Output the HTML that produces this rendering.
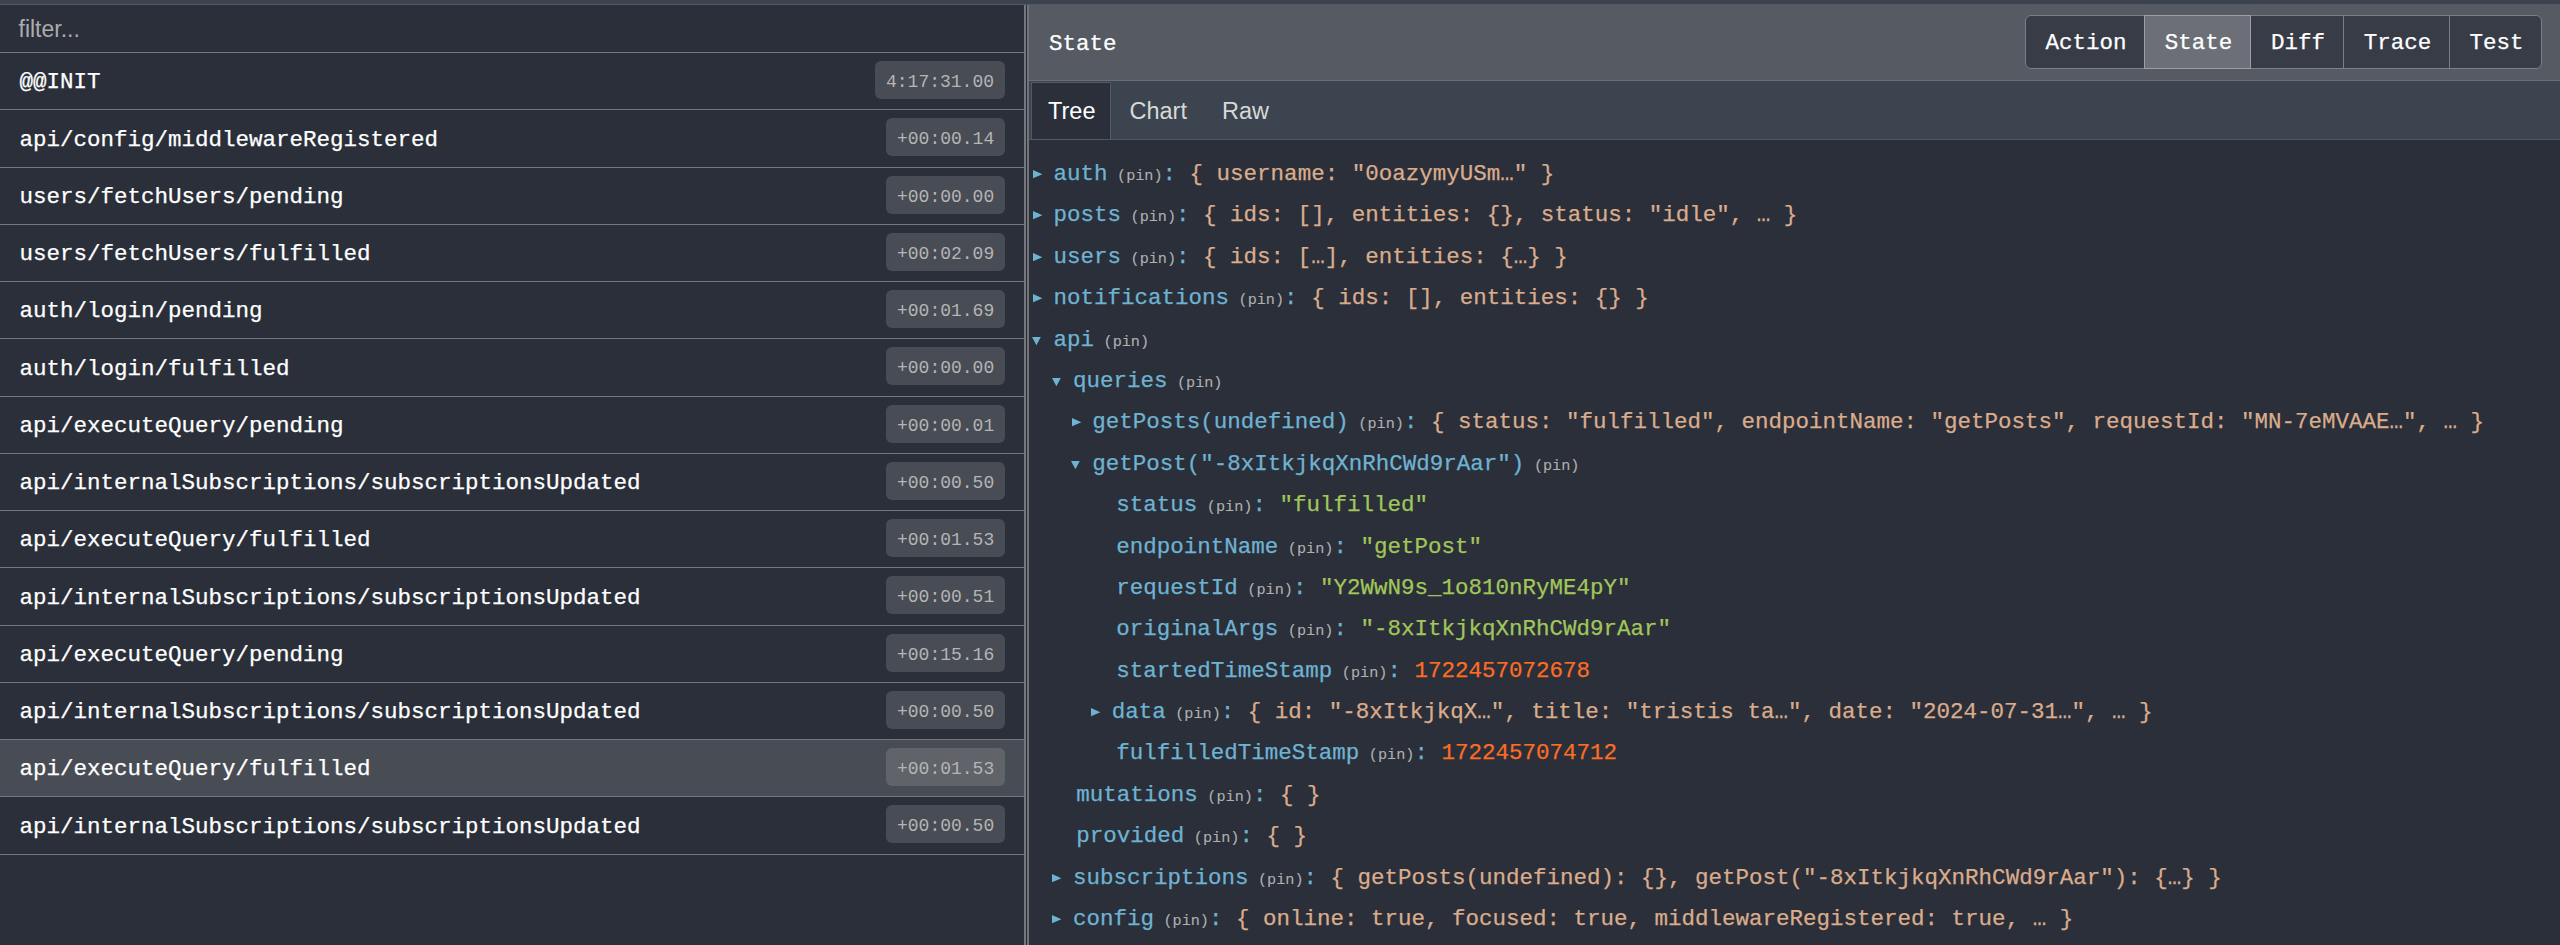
<!DOCTYPE html><html><head><meta charset="utf-8"><style>
*{box-sizing:border-box;margin:0;padding:0}
html,body{width:2560px;height:945px;overflow:hidden;background:#2a2f3a}
body{position:relative;font-family:"Liberation Mono",monospace;color:#fff}
.a{position:absolute;white-space:pre}
.m{font-family:"Liberation Mono",monospace;font-size:22.5px;line-height:22.5px;-webkit-text-stroke:0.25px currentColor}
.s{font-family:"Liberation Sans",sans-serif}
.pin{font-size:15.2px;color:#b0b0b0;padding-left:9.5px;-webkit-text-stroke:0.1px currentColor}
.k{color:#6fb3d2} .v{color:#a1c659} .n{color:#fc6d24} .h{color:#daac8c}
.arr{position:absolute;width:0;height:0}
</style></head><body>
<div class="a" style="left:0px;top:0px;width:2560px;height:4px;background:#3d434e;"></div>
<div class="a" style="left:0px;top:4px;width:2560px;height:1px;background:#4f5a65;"></div>
<div class="a" style="left:1024px;top:5px;width:2px;height:940px;background:#76777e;"></div>
<div class="a" style="left:1026px;top:5px;width:1px;height:940px;background:#282c37;"></div>
<div class="a" style="left:1027px;top:5px;width:2px;height:940px;background:#737479;"></div>
<div class="a s" style="left:18.5px;top:18.18px;font-size:23px;line-height:23px;color:#aaacb0">filter...</div>
<div class="a" style="left:0px;top:52px;width:1024px;height:1px;background:#74777c;"></div>
<div class="a" style="left:0px;top:109px;width:1024px;height:1px;background:#74777c;"></div>
<div class="a m" style="left:19.5px;top:70.80px;color:#fff;font-size:22.5px;line-height:22.5px;">@@INIT</div>
<div class="a" style="left:875px;top:61px;width:130.0px;height:38px;background:#484c54;border-radius:6px"></div>
<div class="a" style="left:886px;top:63px;width:108.0px;height:38px;line-height:38px;font-size:18px;font-family:'Liberation Mono',monospace;color:#b5b5b5">4:17:31.00</div>
<div class="a" style="left:0px;top:167px;width:1024px;height:1px;background:#74777c;"></div>
<div class="a m" style="left:19.5px;top:128.80px;color:#fff;font-size:22.5px;line-height:22.5px;">api/config/middlewareRegistered</div>
<div class="a" style="left:886px;top:118px;width:119.2px;height:38px;background:#484c54;border-radius:6px"></div>
<div class="a" style="left:897px;top:120px;width:97.2px;height:38px;line-height:38px;font-size:18px;font-family:'Liberation Mono',monospace;color:#b5b5b5">+00:00.14</div>
<div class="a" style="left:0px;top:224px;width:1024px;height:1px;background:#74777c;"></div>
<div class="a m" style="left:19.5px;top:185.80px;color:#fff;font-size:22.5px;line-height:22.5px;">users/fetchUsers/pending</div>
<div class="a" style="left:886px;top:176px;width:119.2px;height:38px;background:#484c54;border-radius:6px"></div>
<div class="a" style="left:897px;top:178px;width:97.2px;height:38px;line-height:38px;font-size:18px;font-family:'Liberation Mono',monospace;color:#b5b5b5">+00:00.00</div>
<div class="a" style="left:0px;top:281px;width:1024px;height:1px;background:#74777c;"></div>
<div class="a m" style="left:19.5px;top:242.80px;color:#fff;font-size:22.5px;line-height:22.5px;">users/fetchUsers/fulfilled</div>
<div class="a" style="left:886px;top:233px;width:119.2px;height:38px;background:#484c54;border-radius:6px"></div>
<div class="a" style="left:897px;top:235px;width:97.2px;height:38px;line-height:38px;font-size:18px;font-family:'Liberation Mono',monospace;color:#b5b5b5">+00:02.09</div>
<div class="a" style="left:0px;top:338px;width:1024px;height:1px;background:#74777c;"></div>
<div class="a m" style="left:19.5px;top:299.80px;color:#fff;font-size:22.5px;line-height:22.5px;">auth/login/pending</div>
<div class="a" style="left:886px;top:290px;width:119.2px;height:38px;background:#484c54;border-radius:6px"></div>
<div class="a" style="left:897px;top:292px;width:97.2px;height:38px;line-height:38px;font-size:18px;font-family:'Liberation Mono',monospace;color:#b5b5b5">+00:01.69</div>
<div class="a" style="left:0px;top:396px;width:1024px;height:1px;background:#74777c;"></div>
<div class="a m" style="left:19.5px;top:357.80px;color:#fff;font-size:22.5px;line-height:22.5px;">auth/login/fulfilled</div>
<div class="a" style="left:886px;top:347px;width:119.2px;height:38px;background:#484c54;border-radius:6px"></div>
<div class="a" style="left:897px;top:349px;width:97.2px;height:38px;line-height:38px;font-size:18px;font-family:'Liberation Mono',monospace;color:#b5b5b5">+00:00.00</div>
<div class="a" style="left:0px;top:453px;width:1024px;height:1px;background:#74777c;"></div>
<div class="a m" style="left:19.5px;top:414.80px;color:#fff;font-size:22.5px;line-height:22.5px;">api/executeQuery/pending</div>
<div class="a" style="left:886px;top:405px;width:119.2px;height:38px;background:#484c54;border-radius:6px"></div>
<div class="a" style="left:897px;top:407px;width:97.2px;height:38px;line-height:38px;font-size:18px;font-family:'Liberation Mono',monospace;color:#b5b5b5">+00:00.01</div>
<div class="a" style="left:0px;top:510px;width:1024px;height:1px;background:#74777c;"></div>
<div class="a m" style="left:19.5px;top:471.80px;color:#fff;font-size:22.5px;line-height:22.5px;">api/internalSubscriptions/subscriptionsUpdated</div>
<div class="a" style="left:886px;top:462px;width:119.2px;height:38px;background:#484c54;border-radius:6px"></div>
<div class="a" style="left:897px;top:464px;width:97.2px;height:38px;line-height:38px;font-size:18px;font-family:'Liberation Mono',monospace;color:#b5b5b5">+00:00.50</div>
<div class="a" style="left:0px;top:567px;width:1024px;height:1px;background:#74777c;"></div>
<div class="a m" style="left:19.5px;top:528.80px;color:#fff;font-size:22.5px;line-height:22.5px;">api/executeQuery/fulfilled</div>
<div class="a" style="left:886px;top:519px;width:119.2px;height:38px;background:#484c54;border-radius:6px"></div>
<div class="a" style="left:897px;top:521px;width:97.2px;height:38px;line-height:38px;font-size:18px;font-family:'Liberation Mono',monospace;color:#b5b5b5">+00:01.53</div>
<div class="a" style="left:0px;top:625px;width:1024px;height:1px;background:#74777c;"></div>
<div class="a m" style="left:19.5px;top:586.80px;color:#fff;font-size:22.5px;line-height:22.5px;">api/internalSubscriptions/subscriptionsUpdated</div>
<div class="a" style="left:886px;top:576px;width:119.2px;height:38px;background:#484c54;border-radius:6px"></div>
<div class="a" style="left:897px;top:578px;width:97.2px;height:38px;line-height:38px;font-size:18px;font-family:'Liberation Mono',monospace;color:#b5b5b5">+00:00.51</div>
<div class="a" style="left:0px;top:682px;width:1024px;height:1px;background:#74777c;"></div>
<div class="a m" style="left:19.5px;top:643.80px;color:#fff;font-size:22.5px;line-height:22.5px;">api/executeQuery/pending</div>
<div class="a" style="left:886px;top:634px;width:119.2px;height:38px;background:#484c54;border-radius:6px"></div>
<div class="a" style="left:897px;top:636px;width:97.2px;height:38px;line-height:38px;font-size:18px;font-family:'Liberation Mono',monospace;color:#b5b5b5">+00:15.16</div>
<div class="a" style="left:0px;top:739px;width:1024px;height:1px;background:#74777c;"></div>
<div class="a m" style="left:19.5px;top:700.80px;color:#fff;font-size:22.5px;line-height:22.5px;">api/internalSubscriptions/subscriptionsUpdated</div>
<div class="a" style="left:886px;top:691px;width:119.2px;height:38px;background:#484c54;border-radius:6px"></div>
<div class="a" style="left:897px;top:693px;width:97.2px;height:38px;line-height:38px;font-size:18px;font-family:'Liberation Mono',monospace;color:#b5b5b5">+00:00.50</div>
<div class="a" style="left:0px;top:740px;width:1024px;height:56px;background:#484c54;"></div>
<div class="a" style="left:0px;top:796px;width:1024px;height:1px;background:#74777c;"></div>
<div class="a m" style="left:19.5px;top:757.80px;color:#fff;font-size:22.5px;line-height:22.5px;">api/executeQuery/fulfilled</div>
<div class="a" style="left:886px;top:748px;width:119.2px;height:38px;background:#60636a;border-radius:6px"></div>
<div class="a" style="left:897px;top:750px;width:97.2px;height:38px;line-height:38px;font-size:18px;font-family:'Liberation Mono',monospace;color:#b5b5b5">+00:01.53</div>
<div class="a" style="left:0px;top:854px;width:1024px;height:1px;background:#74777c;"></div>
<div class="a m" style="left:19.5px;top:815.80px;color:#fff;font-size:22.5px;line-height:22.5px;">api/internalSubscriptions/subscriptionsUpdated</div>
<div class="a" style="left:886px;top:805px;width:119.2px;height:38px;background:#484c54;border-radius:6px"></div>
<div class="a" style="left:897px;top:807px;width:97.2px;height:38px;line-height:38px;font-size:18px;font-family:'Liberation Mono',monospace;color:#b5b5b5">+00:00.50</div>
<div class="a" style="left:1029px;top:5px;width:1531px;height:75px;background:#565a62;"></div>
<div class="a" style="left:1029px;top:80px;width:1531px;height:1px;background:#6b6e74;"></div>
<div class="a m" style="left:1049px;top:32.80px;color:#fff;font-size:22.5px;line-height:22.5px;">State</div>
<div class="a" style="left:2025px;top:15px;width:517px;height:54px;border:1px solid #7b7e84;border-radius:6px;background:#383c47;overflow:hidden"></div>
<div class="a" style="left:2145px;top:16px;width:105px;height:52px;background:#6c6f78;"></div>
<div class="a" style="left:2144px;top:15px;width:107px;height:1px;background:#9c9ea3;"></div>
<div class="a" style="left:2144px;top:68px;width:107px;height:1px;background:#9c9ea3;"></div>
<div class="a" style="left:2144px;top:15px;width:1px;height:54px;background:#9c9ea3;"></div>
<div class="a" style="left:2250px;top:15px;width:1px;height:54px;background:#9c9ea3;"></div>
<div class="a" style="left:2343px;top:16px;width:1px;height:52px;background:#7b7e84;"></div>
<div class="a" style="left:2449px;top:16px;width:1px;height:52px;background:#7b7e84;"></div>
<div class="a m" style="left:2045.5px;top:31.80px;color:#fff;font-size:22.5px;line-height:22.5px;">Action</div>
<div class="a m" style="left:2164.75px;top:31.80px;color:#fff;font-size:22.5px;line-height:22.5px;">State</div>
<div class="a m" style="left:2271.0px;top:31.80px;color:#fff;font-size:22.5px;line-height:22.5px;">Diff</div>
<div class="a m" style="left:2363.75px;top:31.80px;color:#fff;font-size:22.5px;line-height:22.5px;">Trace</div>
<div class="a m" style="left:2469.5px;top:31.80px;color:#fff;font-size:22.5px;line-height:22.5px;">Test</div>
<div class="a" style="left:1029px;top:81px;width:1531px;height:58px;background:#3c444f;"></div>
<div class="a" style="left:1029px;top:139px;width:1531px;height:1px;background:#4f5a65;"></div>
<div class="a" style="left:1031px;top:82px;width:80px;height:57px;background:#2a2f3a;border:1px solid #4f5a65;border-bottom:0"></div>
<div class="a s" style="left:1048px;top:99.73px;font-size:23.5px;line-height:23.5px;color:#ffffff">Tree</div>
<div class="a s" style="left:1129.5px;top:99.73px;font-size:23.5px;line-height:23.5px;color:#d8d8d8">Chart</div>
<div class="a s" style="left:1222px;top:99.73px;font-size:23.5px;line-height:23.5px;color:#d8d8d8">Raw</div>
<svg class="a" style="left:1033.00px;top:169.80px" width="11" height="10"><polygon points="0,0 9.4,4.15 0,8.3" fill="#6fb3d2"/></svg>
<div class="a m" style="left:1053.5px;top:162.80px;color:#fff;font-size:22.5px;line-height:22.5px;"><span class="k">auth</span><span class="pin">(pin)</span><span class="k">: </span><span class="h">{ username: "0oazymyUSm…" }</span></div>
<svg class="a" style="left:1033.00px;top:210.80px" width="11" height="10"><polygon points="0,0 9.4,4.15 0,8.3" fill="#6fb3d2"/></svg>
<div class="a m" style="left:1053.5px;top:203.80px;color:#fff;font-size:22.5px;line-height:22.5px;"><span class="k">posts</span><span class="pin">(pin)</span><span class="k">: </span><span class="h">{ ids: [], entities: {}, status: "idle", … }</span></div>
<svg class="a" style="left:1033.00px;top:252.80px" width="11" height="10"><polygon points="0,0 9.4,4.15 0,8.3" fill="#6fb3d2"/></svg>
<div class="a m" style="left:1053.5px;top:245.80px;color:#fff;font-size:22.5px;line-height:22.5px;"><span class="k">users</span><span class="pin">(pin)</span><span class="k">: </span><span class="h">{ ids: […], entities: {…} }</span></div>
<svg class="a" style="left:1033.00px;top:293.80px" width="11" height="10"><polygon points="0,0 9.4,4.15 0,8.3" fill="#6fb3d2"/></svg>
<div class="a m" style="left:1053.5px;top:286.80px;color:#fff;font-size:22.5px;line-height:22.5px;"><span class="k">notifications</span><span class="pin">(pin)</span><span class="k">: </span><span class="h">{ ids: [], entities: {} }</span></div>
<svg class="a" style="left:1032.40px;top:336.90px" width="10" height="10"><polygon points="0,0 8.8,0 4.4,8.2" fill="#6fb3d2"/></svg>
<div class="a m" style="left:1053.5px;top:328.80px;color:#fff;font-size:22.5px;line-height:22.5px;"><span class="k">api</span><span class="pin">(pin)</span></div>
<svg class="a" style="left:1051.80px;top:377.90px" width="10" height="10"><polygon points="0,0 8.8,0 4.4,8.2" fill="#6fb3d2"/></svg>
<div class="a m" style="left:1072.9px;top:369.80px;color:#fff;font-size:22.5px;line-height:22.5px;"><span class="k">queries</span><span class="pin">(pin)</span></div>
<svg class="a" style="left:1071.80px;top:417.80px" width="11" height="10"><polygon points="0,0 9.4,4.15 0,8.3" fill="#6fb3d2"/></svg>
<div class="a m" style="left:1092.3px;top:410.80px;color:#fff;font-size:22.5px;line-height:22.5px;"><span class="k">getPosts(undefined)</span><span class="pin">(pin)</span><span class="k">: </span><span class="h">{ status: "fulfilled", endpointName: "getPosts", requestId: "MN-7eMVAAE…", … }</span></div>
<svg class="a" style="left:1071.20px;top:460.90px" width="10" height="10"><polygon points="0,0 8.8,0 4.4,8.2" fill="#6fb3d2"/></svg>
<div class="a m" style="left:1092.3px;top:452.80px;color:#fff;font-size:22.5px;line-height:22.5px;"><span class="k">getPost("-8xItkjkqXnRhCWd9rAar")</span><span class="pin">(pin)</span></div>
<div class="a m" style="left:1116.3px;top:493.80px;color:#fff;font-size:22.5px;line-height:22.5px;"><span class="k">status</span><span class="pin">(pin)</span><span class="k">: </span><span class="v">"fulfilled"</span></div>
<div class="a m" style="left:1116.3px;top:535.80px;color:#fff;font-size:22.5px;line-height:22.5px;"><span class="k">endpointName</span><span class="pin">(pin)</span><span class="k">: </span><span class="v">"getPost"</span></div>
<div class="a m" style="left:1116.3px;top:576.80px;color:#fff;font-size:22.5px;line-height:22.5px;"><span class="k">requestId</span><span class="pin">(pin)</span><span class="k">: </span><span class="v">"Y2WwN9s_1o810nRyME4pY"</span></div>
<div class="a m" style="left:1116.3px;top:617.80px;color:#fff;font-size:22.5px;line-height:22.5px;"><span class="k">originalArgs</span><span class="pin">(pin)</span><span class="k">: </span><span class="v">"-8xItkjkqXnRhCWd9rAar"</span></div>
<div class="a m" style="left:1116.3px;top:659.80px;color:#fff;font-size:22.5px;line-height:22.5px;"><span class="k">startedTimeStamp</span><span class="pin">(pin)</span><span class="k">: </span><span class="n">1722457072678</span></div>
<svg class="a" style="left:1091.20px;top:707.80px" width="11" height="10"><polygon points="0,0 9.4,4.15 0,8.3" fill="#6fb3d2"/></svg>
<div class="a m" style="left:1111.7px;top:700.80px;color:#fff;font-size:22.5px;line-height:22.5px;"><span class="k">data</span><span class="pin">(pin)</span><span class="k">: </span><span class="h">{ id: "-8xItkjkqX…", title: "tristis ta…", date: "2024-07-31…", … }</span></div>
<div class="a m" style="left:1116.3px;top:741.80px;color:#fff;font-size:22.5px;line-height:22.5px;"><span class="k">fulfilledTimeStamp</span><span class="pin">(pin)</span><span class="k">: </span><span class="n">1722457074712</span></div>
<div class="a m" style="left:1076.3000000000002px;top:783.80px;color:#fff;font-size:22.5px;line-height:22.5px;"><span class="k">mutations</span><span class="pin">(pin)</span><span class="k">: </span><span class="h">{ }</span></div>
<div class="a m" style="left:1076.3000000000002px;top:824.80px;color:#fff;font-size:22.5px;line-height:22.5px;"><span class="k">provided</span><span class="pin">(pin)</span><span class="k">: </span><span class="h">{ }</span></div>
<svg class="a" style="left:1052.40px;top:873.80px" width="11" height="10"><polygon points="0,0 9.4,4.15 0,8.3" fill="#6fb3d2"/></svg>
<div class="a m" style="left:1072.9px;top:866.80px;color:#fff;font-size:22.5px;line-height:22.5px;"><span class="k">subscriptions</span><span class="pin">(pin)</span><span class="k">: </span><span class="h">{ getPosts(undefined): {}, getPost("-8xItkjkqXnRhCWd9rAar"): {…} }</span></div>
<svg class="a" style="left:1052.40px;top:914.80px" width="11" height="10"><polygon points="0,0 9.4,4.15 0,8.3" fill="#6fb3d2"/></svg>
<div class="a m" style="left:1072.9px;top:907.80px;color:#fff;font-size:22.5px;line-height:22.5px;"><span class="k">config</span><span class="pin">(pin)</span><span class="k">: </span><span class="h">{ online: true, focused: true, middlewareRegistered: true, … }</span></div>
</body></html>
